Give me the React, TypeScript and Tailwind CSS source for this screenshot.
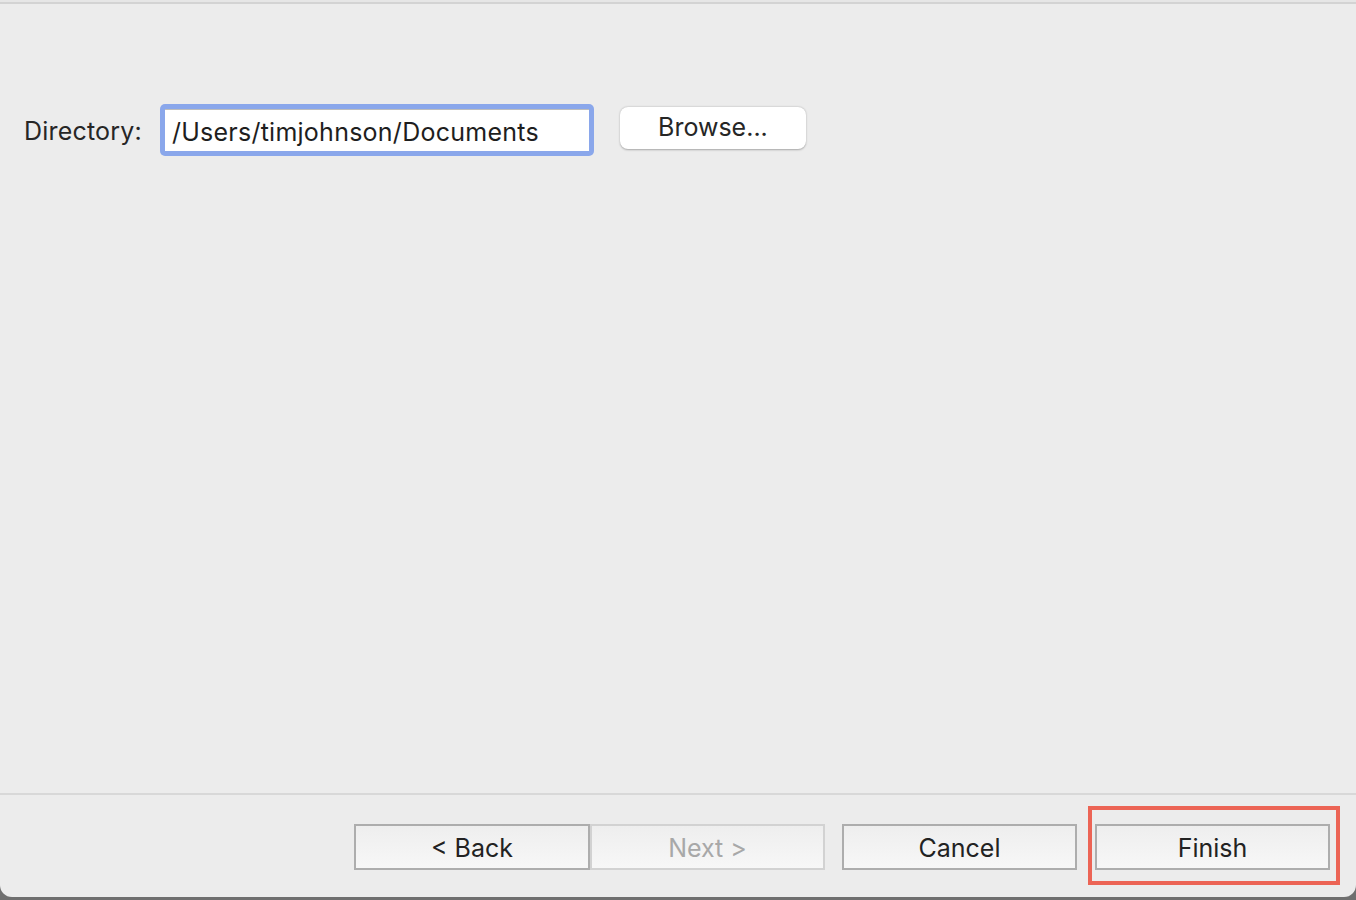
import React from 'react';

const font = { fontFamily: 'Inter, "Liberation Sans", sans-serif' };

const WizardButton: React.FC<{ label: string; disabled?: boolean; className?: string }> = ({
  label,
  disabled,
  className = '',
}) => (
  <button
    disabled={disabled}
    className={`h-[46px] w-[235px] border-2 bg-gradient-to-b from-[#eeeeee] to-[#f7f7f7] pt-[3px] text-[25px] leading-none ${
      disabled ? 'border-[#d2d2d2] text-[#a8a8a8]' : 'border-[#adadad] text-[#222222]'
    } ${className}`}
  >
    {label}
  </button>
);

const App: React.FC = () => {
  return (
    <div className="h-[900px] w-[1356px] overflow-hidden bg-[#6f6f6f]" style={font}>
      <div className="relative flex h-[897px] flex-col rounded-b-[12px] bg-[#ececec]">
        {/* top edge */}
        <div className="h-[2px] bg-[#e6e6e6]"></div>
        <div className="h-[2px] bg-[#d3d3d3]"></div>

        {/* directory row */}
        <div className="flex items-center pl-[24px] pt-[100px]">
          <span className="mt-[4px] text-[25px] tracking-[0.2px] text-[#262626]">Directory:</span>
          <div className="ml-[18px] rounded-[5px] bg-[#8aa7eb] p-[5px]">
            <div className="flex h-[42px] w-[424px] items-center border-t border-[#bdbdbd] bg-white pl-[7px]">
              <span className="mt-[4px] text-[25px] tracking-[0.25px] text-[#1e1e1e]">/Users/timjohnson/Documents</span>
            </div>
          </div>
          <button className="mb-[5px] ml-[26px] h-[42px] w-[186px] rounded-[8px] bg-white text-[25px] text-[#262626] shadow-[0_0.5px_2px_rgba(0,0,0,0.3)]">
            Browse...
          </button>
        </div>

        <div className="flex-1"></div>

        {/* footer */}
        <div className="h-[2px] bg-[#d8d8d8]"></div>
        <div className="flex justify-end pb-[27px] pr-[26px] pt-[29px]">
          <WizardButton label="< Back" className="w-[236px]" />
          <WizardButton label="Next >" disabled />
          <WizardButton label="Cancel" className="ml-[17px]" />
          <WizardButton label="Finish" className="ml-[18px]" />
        </div>

        {/* highlight annotation */}
        <div className="absolute left-[1088px] top-[806px] h-[79px] w-[252px] border-[4px] border-[#ec6455]"></div>
      </div>
    </div>
  );
};

export default App;
